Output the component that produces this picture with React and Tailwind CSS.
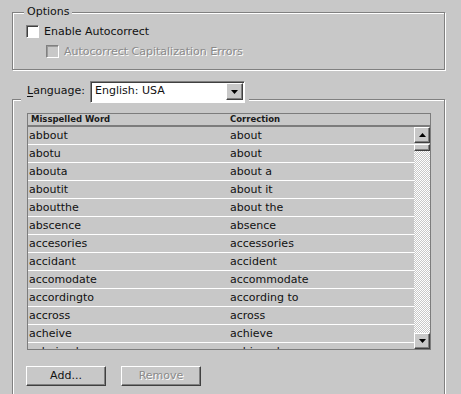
const rows = [
  ["abbout", "about"],
  ["abotu", "about"],
  ["abouta", "about a"],
  ["aboutit", "about it"],
  ["aboutthe", "about the"],
  ["abscence", "absence"],
  ["accesories", "accessories"],
  ["accidant", "accident"],
  ["accomodate", "accommodate"],
  ["accordingto", "according to"],
  ["accross", "across"],
  ["acheive", "achieve"],
  ["acheived", "achieved"],
];

function Checkbox({ disabled }) {
  return (
    <span
      className={`block w-[13px] h-[13px] shrink-0 border border-t-[#808080] border-l-[#808080] border-r-white border-b-white ${
        disabled
          ? "bg-[#c8c8c8] shadow-[inset_1px_1px_0_#9a9a9a]"
          : "bg-white shadow-[inset_1px_1px_0_#404040]"
      }`}
    />
  );
}

function Arrow({ dir }) {
  return (
    <svg width="7" height="4" viewBox="0 0 7 4">
      {dir === "up" ? (
        <polygon points="3.5,0 7,4 0,4" fill="#000" />
      ) : (
        <polygon points="0,0 7,0 3.5,4" fill="#000" />
      )}
    </svg>
  );
}

const raised =
  "border border-t-white border-l-white border-r-[#404040] border-b-[#404040] shadow-[inset_-1px_-1px_0_#808080] bg-[#c8c8c8]";

export default function App() {
  return (
    <div className="w-[461px] h-[394px] overflow-hidden bg-[#c8c8c8] pl-[12px] pt-[12px] font-['DejaVu_Sans',sans-serif] text-[11px] text-[#111]">
      {/* Options group */}
      <div className="w-[433px] h-[58px] border border-[#808080] shadow-[1px_1px_0_#fff,inset_1px_1px_0_#fff]">
        <div className="ml-[11px] -mt-[8px] px-[3px] w-fit h-[14px] leading-[14px] bg-[#c8c8c8]">
          Options
        </div>
        <div className="ml-[13px] mt-[6px] h-[13px] flex items-center gap-[5px] leading-[13px]">
          <Checkbox />
          <span>Enable Autocorrect</span>
        </div>
        <div className="ml-[33px] mt-[7px] h-[13px] flex items-center gap-[5px] leading-[13px] text-[#8a8a8a] [text-shadow:1px_1px_0_#fff]">
          <Checkbox disabled />
          <span>Autocorrect Capitalization Errors</span>
        </div>
      </div>

      {/* Language group */}
      <div className="mt-[29px] w-[433px] h-[320px] border border-[#808080] shadow-[1px_1px_0_#fff,inset_1px_1px_0_#fff]">
        <div className="ml-[8px] -mt-[20px] pl-[6px] pr-[4px] w-fit h-[23px] flex items-center gap-[5px] bg-[#c8c8c8]">
          <span>
            <span className="underline underline-offset-2">L</span>anguage:
          </span>
          <div className="w-[155px] h-[22px] flex items-center justify-between bg-white border border-t-[#808080] border-l-[#808080] border-r-white border-b-white shadow-[inset_1px_1px_0_#404040] pl-[4px] pr-[1px]">
            <span>English: USA</span>
            <span className={`w-[17px] h-[17px] flex items-center justify-center ${raised}`}>
              <Arrow dir="down" />
            </span>
          </div>
        </div>

        {/* word list */}
        <div className="ml-[14px] mt-[10px] w-[404px] h-[237px] border border-[#7c7c7c] flex flex-col overflow-hidden">
          <div className="h-[13px] shrink-0 border-b-2 border-[#7c7c7c] grid grid-cols-[202px_1fr] items-center text-[8.5px] leading-[11px] font-bold text-[#1a1a1a]">
            <span className="pl-[3px]">Misspelled Word</span>
            <span>Correction</span>
          </div>
          <div className="flex flex-1 min-h-0">
            <div className="flex-1 overflow-hidden">
              {rows.map(([wrong, right]) => (
                <div
                  key={wrong}
                  className="h-[18px] border-b border-white grid grid-cols-[202px_1fr] items-center leading-[17px]"
                >
                  <span className="pl-[1px]">{wrong}</span>
                  <span>{right}</span>
                </div>
              ))}
            </div>
            <div className="w-[16px] flex flex-col">
              <div className={`h-[16px] shrink-0 flex items-center justify-center ${raised}`}>
                <Arrow dir="up" />
              </div>
              <div className={`h-[7px] mt-[1px] shrink-0 ${raised}`} />
              <div className="flex-1 bg-[repeating-conic-gradient(#fff_0%_25%,#c8c8c8_0%_50%)] bg-[length:2px_2px]" />
              <div className={`h-[16px] shrink-0 flex items-center justify-center ${raised}`}>
                <Arrow dir="down" />
              </div>
            </div>
          </div>
        </div>

        <div className="ml-[13px] mt-[16px] flex gap-[15px]">
          <button className={`w-[80px] h-[20px] flex items-center justify-center ${raised}`}>
            Add...
          </button>
          <button
            className={`w-[80px] h-[20px] flex items-center justify-center text-[#8a8a8a] [text-shadow:1px_1px_0_#fff] ${raised}`}
          >
            Remove
          </button>
        </div>
      </div>
    </div>
  );
}
